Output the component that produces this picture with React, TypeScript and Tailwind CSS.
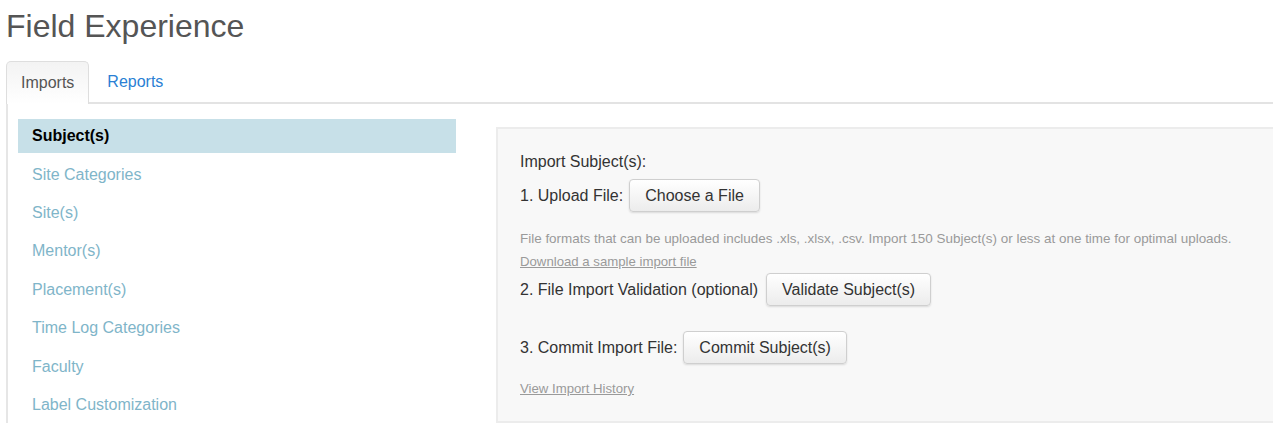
const sideItems = [
  "Site Categories",
  "Site(s)",
  "Mentor(s)",
  "Placement(s)",
  "Time Log Categories",
  "Faculty",
  "Label Customization"
];

function Btn({ children }: { children: React.ReactNode }) {
  return (
    <button
      type="button"
      className="h-[33px] rounded-[4px] border border-[#cfcfcf] bg-gradient-to-b from-white to-[#ececec] px-[15px] text-[16px] text-[#333] shadow-[0_1px_2px_rgba(0,0,0,0.12)]"
    >
      {children}
    </button>
  );
}

export default function App() {
  return (
    <div className="h-[436px] w-[1273px] overflow-hidden bg-white font-['Liberation_Sans',Arial,sans-serif]">
      <div className="w-[1310px] pl-[6px]">
        <h1 className="pt-[5px] text-[32px] leading-[42px] text-[#555]">Field Experience</h1>
        <div className="mt-[14px] flex h-[43px] items-end border-b-2 border-[#e3e3e3]">
          <div className="-mb-[2px] flex h-[43px] items-center rounded-t-[5px] border border-b-0 border-[#dedede] bg-gradient-to-b from-[#f3f3f3] to-white px-[14px] text-[16px] text-[#555]">
            Imports
          </div>
          <div className="flex h-[43px] items-center px-[18px] pt-[3px] text-[16px] text-[#2a7fd4]">Reports</div>
        </div>
        <div className="flex border-l-2 border-[#e6e6e6]">
          <div className="w-[448px] shrink-0 pl-[10px] pt-[15px]">
            <div className="flex h-[34px] items-center bg-[#c7e0e8] pl-[14px] text-[16px] font-bold text-black">
              Subject(s)
            </div>
            {sideItems.map((item) => (
              <div key={item} className="flex h-[38.4px] items-center pl-[14px] pt-[5px] text-[16px] text-[#7fb5c9]">
                {item}
              </div>
            ))}
          </div>
          <div className="ml-[40px] mt-[23px] h-[296px] flex-1 border-2 border-[#ececec] bg-[#f8f8f8] pl-[22px] pt-[23px] text-[#333]">
            <div className="text-[16px] leading-[20px]">Import Subject(s):</div>
            <div className="mt-[7px] flex items-center gap-[6px] text-[16px]">
              <span>1. Upload File:</span>
              <Btn>Choose a File</Btn>
            </div>
            <div className="mt-[19px] text-[13.45px] leading-[16px] text-[#9a9a9a]">
              File formats that can be uploaded includes .xls, .xlsx, .csv. Import 150 Subject(s) or less at one time for optimal uploads.
            </div>
            <div className="mt-[7px] text-[13.2px] leading-[16px] text-[#9a9a9a] underline">Download a sample import file</div>
            <div className="mt-[3px] flex items-center gap-[8px] text-[16px]">
              <span>2. File Import Validation (optional)</span>
              <Btn>Validate Subject(s)</Btn>
            </div>
            <div className="mt-[25px] flex items-center gap-[6px] text-[16px]">
              <span>3. Commit Import File:</span>
              <Btn>Commit Subject(s)</Btn>
            </div>
            <div className="mt-[17px] text-[13.2px] leading-[16px] text-[#9a9a9a] underline">View Import History</div>
          </div>
        </div>
      </div>
    </div>
  );
}
